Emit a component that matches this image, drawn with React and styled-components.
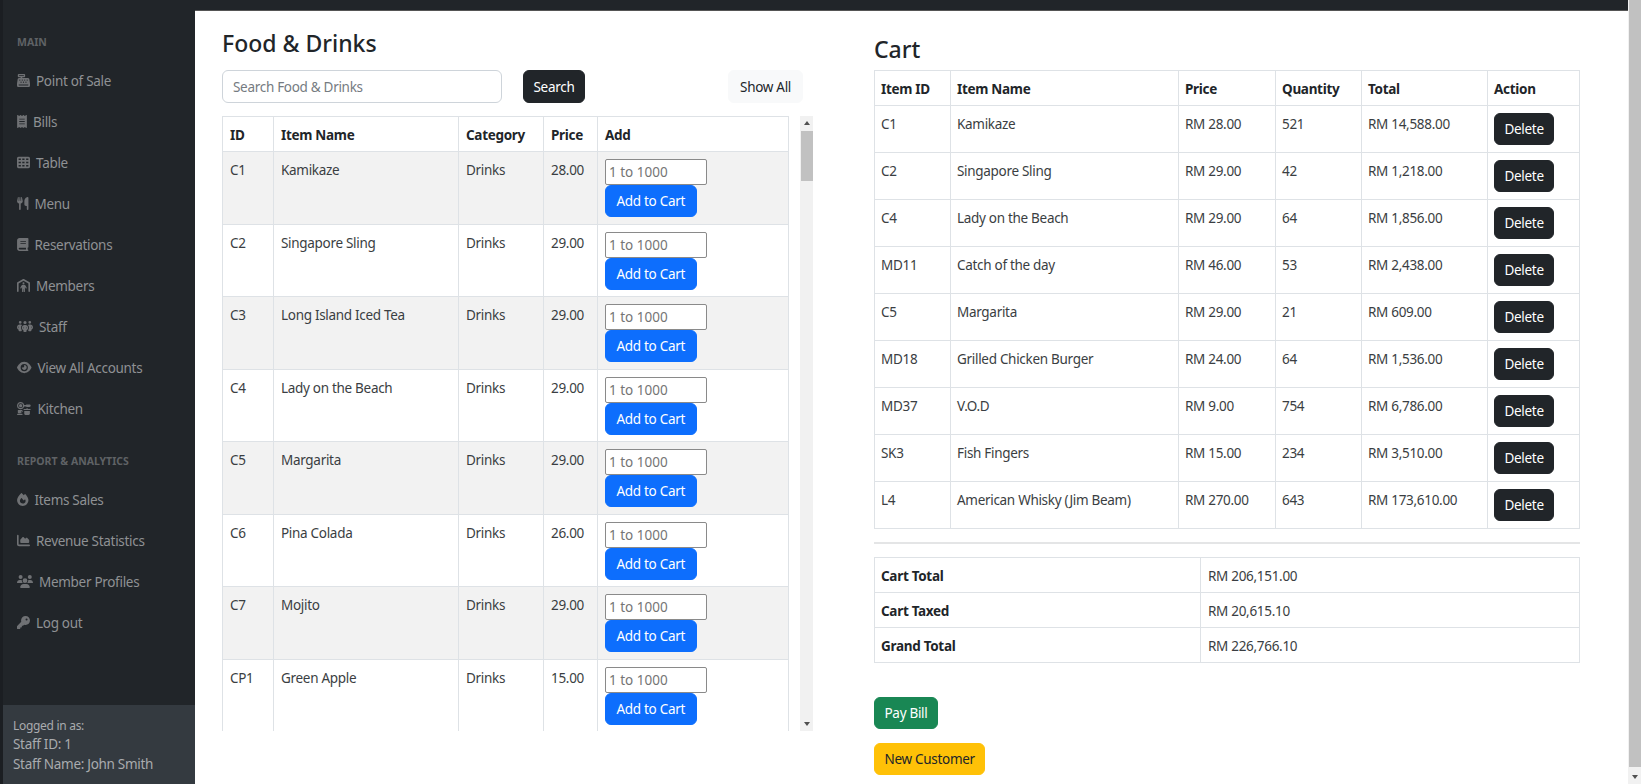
import React from "react"
import styled, { createGlobalStyle } from "styled-components"
import {
  FaCashRegister,
  FaReceipt,
  FaTableCells,
  FaUtensils,
  FaBook,
  FaPersonShelter,
  FaPeopleGroup,
  FaEye,
  FaKitchenSet,
  FaFire,
  FaChartArea,
  FaUsers,
  FaKey,
} from "react-icons/fa6"

const GlobalStyle = createGlobalStyle`
  html, body {
    margin: 0;
    height: 100%;
    overflow: hidden;
  }
  body {
    font-family: "Noto Sans", "Open Sans", sans-serif;
    font-size: 13.5px;
    letter-spacing: -0.3px;
    color: #212529;
    background: #fff;
  }
  * {
    box-sizing: border-box;
  }
`

const Page = styled.div`
  display: flex;
  height: 784px;
  background: #fff;
  overflow: hidden;
`

const Sidebar = styled.aside`
  width: 195px;
  flex: none;
  display: flex;
  flex-direction: column;
  background: #212529;
  border-left: 3px solid #1b1e22;
`

const SideNav = styled.nav`
  flex: 1;
  padding-top: 34px;
`

const SectionLabel = styled.div`
  height: 16px;
  line-height: 16px;
  padding-left: 14px;
  margin-bottom: 10px;
  margin-top: ${({ $before }) => $before || 0}px;
  font-size: 10.5px;
  font-weight: 700;
  letter-spacing: 0;
  color: #5f6265;
`

const NavItem = styled.a`
  display: flex;
  align-items: center;
  gap: 6px;
  height: 41px;
  padding-left: 14px;
  color: #8f9194;

  svg {
    flex: none;
    width: ${({ $w }) => $w}px;
    height: 13px;
    color: #6f7174;
  }
`

const LoginBox = styled.div`
  height: 79px;
  padding: 12px 10px 0;
  background: #343a40;
  color: #a9abae;
  line-height: 19.5px;

  small {
    display: block;
    font-size: 12px;
    line-height: 18px;
  }
`

const Main = styled.main`
  flex: 1;
  min-width: 0;
  display: flex;
  flex-direction: column;
`

const TopBar = styled.div`
  height: 11px;
  flex: none;
  background: #212529;
  border-bottom: 1px solid #555;
`

const Content = styled.div`
  flex: 1;
  min-height: 0;
  display: flex;
`

const LeftColumn = styled.section`
  width: 679px;
  flex: none;
  padding: 17px 0 0 27px;
`

const RightColumn = styled.section`
  width: 706px;
  flex: none;
`

const Title = styled.h1`
  margin: 0;
  font-size: 23px;
  font-weight: 500;
  line-height: 30px;
  letter-spacing: 0;
`

const CartTitle = styled(Title)`
  padding-top: 23px;
  height: 59px;
`

const SearchRow = styled.div`
  display: flex;
  margin-top: 12px;
  width: 581px;
`

const SearchInput = styled.input`
  width: 280px;
  height: 33px;
  padding: 0 10px;
  border: 1px solid #ced4da;
  border-radius: 6px;
  font: inherit;
  letter-spacing: inherit;
  margin-right: 21px;

  &::placeholder {
    color: #757b81;
  }
`

const Button = styled.button`
  height: 32px;
  padding: 0 9.5px;
  border: 1px solid ${({ $bg }) => $bg};
  border-radius: 6px;
  background: ${({ $bg }) => $bg};
  color: ${({ $fg }) => $fg};
  font: inherit;
  letter-spacing: inherit;
  white-space: nowrap;
`

const SearchButton = styled(Button)`
  height: 33px;
`

const ShowAll = styled(SearchButton)`
  margin-left: auto;
  padding: 0 11px;
`

const AddButton = styled(Button)`
  display: block;
  padding: 0 10.5px;
`

const DeleteButton = styled(Button)`
  display: block;
  margin-top: -1px;
`

const TableScroller = styled.div`
  display: flex;
  margin-top: 13px;
  height: 615px;
  width: 591px;
  overflow: hidden;
  justify-content: space-between;
`

const TableClip = styled.div`
  width: 567px;
  overflow: hidden;
`

const Table = styled.table`
  width: 100%;
  table-layout: fixed;
  border-collapse: collapse;
  color: #212529;

  th, td {
    border: 1px solid #dee2e6;
    padding: 8px 7px 6px;
    text-align: left;
    vertical-align: top;
    line-height: 20px;
  }
  th {
    font-weight: 700;
    height: 35px;
  }
`

// rows are 72.5px in the original, tables snap to whole pixels so alternate
const ProductRow = styled.tr`
  height: ${({ $odd }) => ($odd ? 73 : 72)}px;
  background: ${({ $odd }) => ($odd ? "#f2f2f2" : "#fff")};
  color: #3a3e42;
`

const QtyInput = styled.input`
  display: block;
  width: 102px;
  height: 25.5px;
  margin-top: -1px;
  padding: 0 3px;
  border: 1px solid #8a8a8a;
  border-radius: 2px;
  background: #fff;
  font: inherit;
  letter-spacing: 0;

  &::placeholder {
    color: #757575;
  }
`

const Scrollbar = styled.div`
  width: 13px;
  background: #f1f1f1;
  display: flex;
  flex-direction: column;
  align-items: center;
`

const ArrowUp = styled.i`
  display: block;
  margin-top: 5px;
  border: 3.5px solid transparent;
  border-top: 0;
  border-bottom: 4px solid #505050;
`

const ArrowDown = styled.i`
  display: block;
  margin-top: auto;
  margin-bottom: 5px;
  border: 3.5px solid transparent;
  border-bottom: 0;
  border-top: 4px solid #505050;
`

const Thumb = styled.div`
  width: 12px;
  height: 50px;
  margin-top: 6px;
  background: #c1c1c1;
`

const CartTable = styled(Table)`
  th, td {
    padding-left: 6px;
  }
  td {
    color: #3a3e42;
    height: 47px;
  }
`

const Rule = styled.hr`
  margin: 13px 0;
  border: 0;
  border-top: 2px solid #e4e5e6;
`

const SummaryTable = styled(Table)`
  th, td {
    height: 35px;
  }
  th {
    padding-left: 6px;
  }
  td {
    color: #3a3e42;
  }
`

const ButtonStack = styled.div`
  display: flex;
  flex-direction: column;
  align-items: flex-start;
  gap: 14px;
  margin-top: 34px;
`

const PageScrollbar = styled.div`
  width: 13px;
  flex: none;
  background: #f1f1f1;
  display: flex;
  flex-direction: column;
  align-items: flex-end;

  i {
    margin-right: 3px;
  }
`

const PageThumb = styled.div`
  width: 12px;
  height: 767px;
  flex: none;
  background: #c1c1c1;
`

const navMain = [
  { icon: FaCashRegister, label: "Point of Sale", w: 13 },
  { icon: FaReceipt, label: "Bills", w: 10 },
  { icon: FaTableCells, label: "Table", w: 13 },
  { icon: FaUtensils, label: "Menu", w: 11.5 },
  { icon: FaBook, label: "Reservations", w: 11.5 },
  { icon: FaPersonShelter, label: "Members", w: 13 },
  { icon: FaPeopleGroup, label: "Staff", w: 16 },
  { icon: FaEye, label: "View All Accounts", w: 14.5 },
  { icon: FaKitchenSet, label: "Kitchen", w: 14.5 },
]

const navReport = [
  { icon: FaFire, label: "Items Sales", w: 11.5 },
  { icon: FaChartArea, label: "Revenue Statistics", w: 13 },
  { icon: FaUsers, label: "Member Profiles", w: 16 },
  { icon: FaKey, label: "Log out", w: 13 },
]

const products = [
  ["C1", "Kamikaze", "Drinks", "28.00"],
  ["C2", "Singapore Sling", "Drinks", "29.00"],
  ["C3", "Long Island Iced Tea", "Drinks", "29.00"],
  ["C4", "Lady on the Beach", "Drinks", "29.00"],
  ["C5", "Margarita", "Drinks", "29.00"],
  ["C6", "Pina Colada", "Drinks", "26.00"],
  ["C7", "Mojito", "Drinks", "29.00"],
  ["CP1", "Green Apple", "Drinks", "15.00"],
]

const cart = [
  ["C1", "Kamikaze", "RM 28.00", "521", "RM 14,588.00"],
  ["C2", "Singapore Sling", "RM 29.00", "42", "RM 1,218.00"],
  ["C4", "Lady on the Beach", "RM 29.00", "64", "RM 1,856.00"],
  ["MD11", "Catch of the day", "RM 46.00", "53", "RM 2,438.00"],
  ["C5", "Margarita", "RM 29.00", "21", "RM 609.00"],
  ["MD18", "Grilled Chicken Burger", "RM 24.00", "64", "RM 1,536.00"],
  ["MD37", "V.O.D", "RM 9.00", "754", "RM 6,786.00"],
  ["SK3", "Fish Fingers", "RM 15.00", "234", "RM 3,510.00"],
  ["L4", "American Whisky (Jim Beam)", "RM 270.00", "643", "RM 173,610.00"],
]

const NavList = ({ items }) =>
  items.map(({ icon: Icon, label, w }) => (
    <NavItem key={label} $w={w}>
      <Icon />
      <span>{label}</span>
    </NavItem>
  ))

export default function App() {
  return (
    <Page>
      <GlobalStyle />
      <Sidebar>
        <SideNav>
          <SectionLabel>MAIN</SectionLabel>
          <NavList items={navMain} />
          <SectionLabel $before={24}>REPORT &amp; ANALYTICS</SectionLabel>
          <NavList items={navReport} />
        </SideNav>
        <LoginBox>
          <small>Logged in as:</small>
          Staff ID: 1
          <br />
          Staff Name: John Smith
        </LoginBox>
      </Sidebar>
      <Main>
        <TopBar />
        <Content>
          <LeftColumn>
            <Title>Food &amp; Drinks</Title>
            <SearchRow>
              <SearchInput placeholder="Search Food & Drinks" />
              <SearchButton $bg="#212529" $fg="#fff">Search</SearchButton>
              <ShowAll $bg="#f8f9fa" $fg="#212529">Show All</ShowAll>
            </SearchRow>
            <TableScroller>
              <TableClip>
                <Table>
                  <colgroup>
                    <col width="51" />
                    <col width="185" />
                    <col width="85" />
                    <col width="54" />
                    <col />
                  </colgroup>
                  <thead>
                    <tr>
                      <th>ID</th>
                      <th>Item Name</th>
                      <th>Category</th>
                      <th>Price</th>
                      <th>Add</th>
                    </tr>
                  </thead>
                  <tbody>
                    {products.map((p, i) => (
                      <ProductRow key={p[0]} $odd={i % 2 === 0}>
                        <td>{p[0]}</td>
                        <td>{p[1]}</td>
                        <td>{p[2]}</td>
                        <td>{p[3]}</td>
                        <td>
                          <QtyInput placeholder="1 to 1000" />
                          <AddButton $bg="#0d6efd" $fg="#fff">Add to Cart</AddButton>
                        </td>
                      </ProductRow>
                    ))}
                  </tbody>
                </Table>
              </TableClip>
              <Scrollbar>
                <ArrowUp />
                <Thumb />
                <ArrowDown />
              </Scrollbar>
            </TableScroller>
          </LeftColumn>
          <RightColumn>
            <CartTitle>Cart</CartTitle>
            <CartTable>
              <colgroup>
                <col width="76" />
                <col width="228" />
                <col width="97" />
                <col width="86" />
                <col width="126" />
                <col />
              </colgroup>
              <thead>
                <tr>
                  <th>Item ID</th>
                  <th>Item Name</th>
                  <th>Price</th>
                  <th>Quantity</th>
                  <th>Total</th>
                  <th>Action</th>
                </tr>
              </thead>
              <tbody>
                {cart.map(c => (
                  <tr key={c[0]}>
                    {c.map((v, i) => (
                      <td key={i}>{v}</td>
                    ))}
                    <td>
                      <DeleteButton $bg="#212529" $fg="#fff">Delete</DeleteButton>
                    </td>
                  </tr>
                ))}
              </tbody>
            </CartTable>
            <Rule />
            <SummaryTable>
              <colgroup>
                <col width="326" />
                <col />
              </colgroup>
              <tbody>
                <tr><th>Cart Total</th><td>RM 206,151.00</td></tr>
                <tr><th>Cart Taxed</th><td>RM 20,615.10</td></tr>
                <tr><th>Grand Total</th><td>RM 226,766.10</td></tr>
              </tbody>
            </SummaryTable>
            <ButtonStack>
              <Button $bg="#198754" $fg="#fff">Pay Bill</Button>
              <Button $bg="#ffc107" $fg="#212529">New Customer</Button>
            </ButtonStack>
          </RightColumn>
        </Content>
      </Main>
      <PageScrollbar>
        <PageThumb />
        <ArrowDown />
      </PageScrollbar>
    </Page>
  )
}
